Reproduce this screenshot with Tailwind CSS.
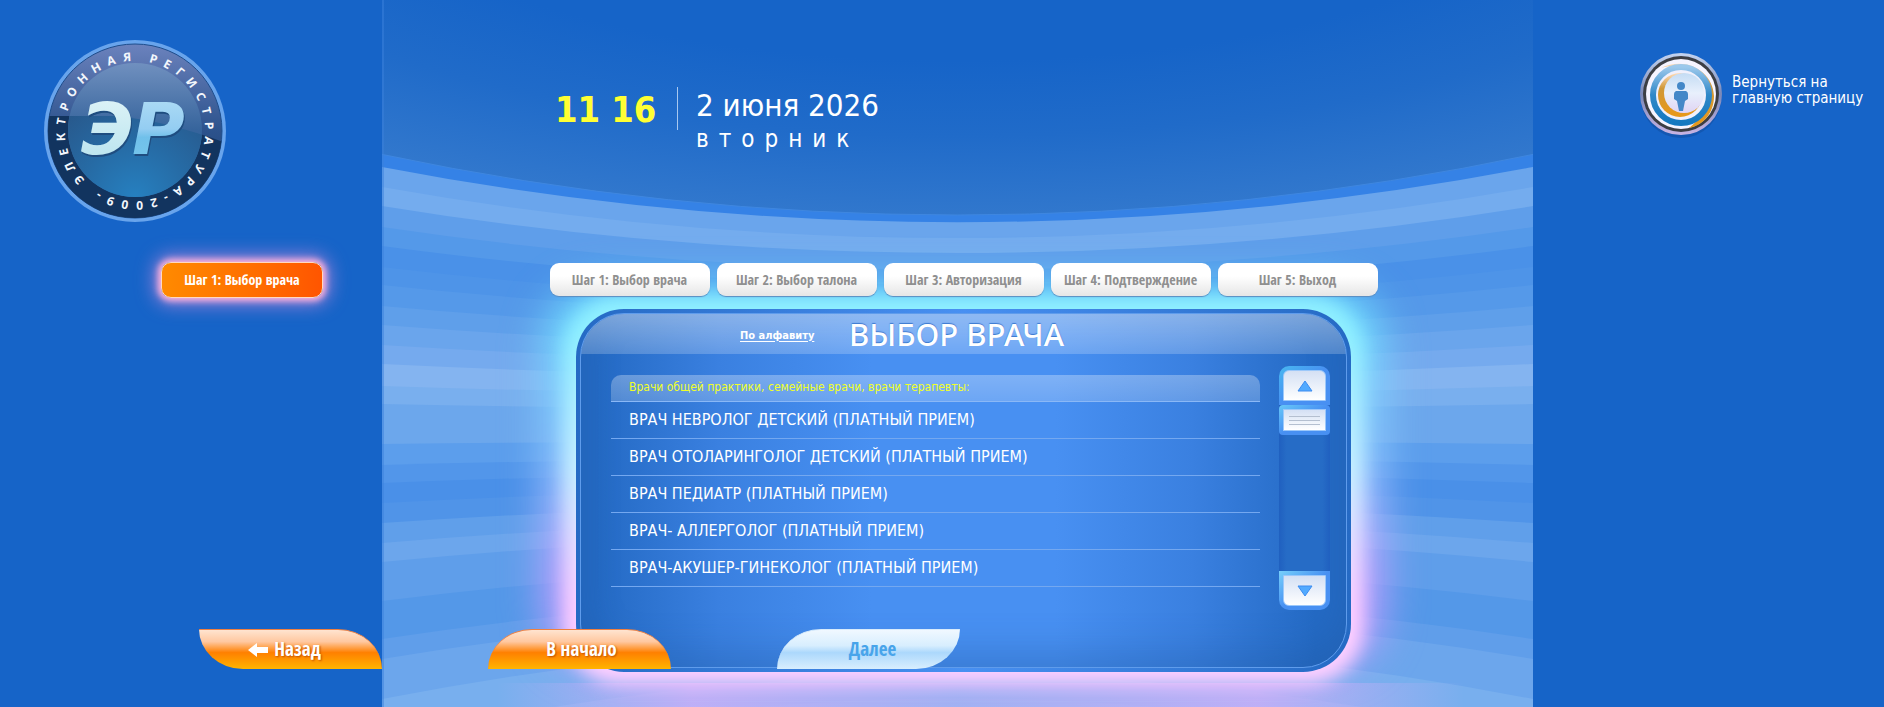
<!DOCTYPE html>
<html lang="ru">
<head>
    <meta charset="UTF-8">
    <meta name="viewport" content="width=device-width, initial-scale=1.0">
    <title>Электронная регистратура - Выбор врача</title>
    <script src="https://cdn.jsdelivr.net/npm/@tailwindcss/browser@4"></script>
</head>
<body class="bg-[#1664c8] font-['DejaVu_Sans_Condensed','Noto_Sans',sans-serif] text-white">
    <div class="relative grid min-h-screen grid-cols-[382px_1fr_351px] overflow-hidden">

        <!-- Левая колонка -->
        <aside class="flex flex-col pt-10">
            <svg class="ml-11 h-[182px] w-[182px]" viewBox="0 0 182 182" role="img" aria-label="Электронная регистратура">
                <defs>
                    <linearGradient id="ringTop" x1="0" y1="0" x2="0" y2="1">
                        <stop offset="0" stop-color="#6b82bd"/>
                        <stop offset="0.5" stop-color="#2c528c"/>
                        <stop offset="1" stop-color="#163b68"/>
                    </linearGradient>
                    <linearGradient id="disc" x1="0" y1="0" x2="0" y2="1">
                        <stop offset="0" stop-color="#7090bf"/>
                        <stop offset="0.5" stop-color="#36649c"/>
                        <stop offset="1" stop-color="#2d6aa8"/>
                    </linearGradient>
                    <radialGradient id="discLow" cx="0.5" cy="1" r="0.8">
                        <stop offset="0" stop-color="#2680c0"/>
                        <stop offset="0.5" stop-color="#266ba5"/>
                        <stop offset="1" stop-color="#28588b"/>
                    </radialGradient>
                    <clipPath id="below"><path d="M0 76H70Q120 80 182 103V182H0Z"/></clipPath>
                    <linearGradient id="fillE" x1="0" y1="0" x2="0" y2="1">
                        <stop offset="0" stop-color="#e2f5f8"/>
                        <stop offset="1" stop-color="#b5e2ee"/>
                    </linearGradient>
                    <linearGradient id="fillR" x1="0" y1="0" x2="0" y2="1">
                        <stop offset="0" stop-color="#b5e0f6"/>
                        <stop offset="0.5" stop-color="#94cdf2"/>
                        <stop offset="0.6" stop-color="#70c0ea"/>
                        <stop offset="1" stop-color="#78c8ec"/>
                    </linearGradient>
                    <path id="ringPath" d="M41 140A70 70 0 1 1 141 140A70 70 0 0 1 41 140"/>
                </defs>
                <circle cx="91" cy="91" r="91" fill="#68a4ec"/>
                <circle cx="91" cy="91" r="87" fill="url(#ringTop)" stroke="#1d4d8c"/>
                <circle cx="91" cy="91" r="87" fill="#12345f" clip-path="url(#below)"/>
                <circle cx="91" cy="90" r="67" fill="url(#disc)"/>
                <circle cx="91" cy="90" r="67" fill="url(#discLow)" clip-path="url(#below)"/>
                <text class="font-['Noto_Sans',sans-serif] text-[12px] font-bold tracking-[7px]" fill="#f2f6fc"><textPath href="#ringPath">ЭЛЕКТРОННАЯ РЕГИСТРАТУРА-2009-</textPath></text>
                <g class="font-['DejaVu_Sans',sans-serif] text-[72px] font-bold italic drop-shadow-[1px_2px_0_#1f4d80]">
                    <text x="37" y="114" fill="url(#fillE)">Э</text>
                    <text x="88" y="114" fill="url(#fillR)">Р</text>
                </g>
            </svg>
            <div class="pt-10 pl-[161px]">
                <button class="h-9 w-[162px] rounded-[10px] border border-[#ffd9c0] bg-linear-to-r from-[#ff8a00] to-[#ff5500] font-['Open_Sans_Condensed','Roboto_Condensed','DejaVu_Sans_Condensed',sans-serif] text-[14px] leading-4 font-bold shadow-[0_0_6px_3px_#ffb4dc,0_0_18px_7px_#e090e0a0]">Шаг 1: Выбор врача</button>
            </div>
        </aside>

        <!-- Центральная часть -->
        <main class="relative isolate flex flex-col">
            <svg class="absolute inset-0 -z-10 h-full w-full" viewBox="0 0 1151 707" preserveAspectRatio="none" aria-hidden="true">
                <defs>
                    <radialGradient id="sky" gradientUnits="userSpaceOnUse" cx="575" cy="-200" r="420" gradientTransform="matrix(2.6 0 0 1 -920 0)">
                        <stop offset="0" stop-color="#1664c8"/>
                        <stop offset="0.62" stop-color="#1664c8"/>
                        <stop offset="0.8" stop-color="#206bc9"/>
                        <stop offset="1" stop-color="#3278cd"/>
                    </radialGradient>
                    <linearGradient id="floor" x1="0" y1="0" x2="1" y2="0">
                        <stop offset="0.1" stop-color="#c8b0f8" stop-opacity="0"/>
                        <stop offset="0.27" stop-color="#c8b0f8" stop-opacity="0.85"/>
                        <stop offset="0.5" stop-color="#a8b0f4" stop-opacity="0.7"/>
                        <stop offset="0.76" stop-color="#c8b0f8" stop-opacity="0.85"/>
                        <stop offset="0.94" stop-color="#c8b0f8" stop-opacity="0"/>
                    </linearGradient>
                </defs>
                <rect width="1151" height="707" fill="#3582e6"/>
                <g id="bands"></g>
                <path d="M-2 -2H1153V154Q575 276 -2 154Z" fill="url(#sky)" stroke="#3f87e0"/>
                <rect y="683" width="1151" height="24" fill="url(#floor)"/>
                <path d="M1 0V707" stroke="#3a80dc" stroke-width="1"/>
            </svg>

            <div class="flex h-[263px] pt-[87px] pl-[173px]">
                <time class="w-[122px] pt-[3px] text-[36px] leading-10 font-bold text-[#ffff33]">11 16</time>
                <div class="h-[43px] w-px bg-[#a8c8f0]"></div>
                <div class="pl-[18px]">
                    <p class="text-[31px] leading-9">2 июня 2026</p>
                    <p class="text-[24px] leading-8 tracking-[10px]">вторник</p>
                </div>
            </div>

            <div class="flex flex-col items-center pl-3">
                <ol class="relative z-10 flex gap-[7px] font-['Open_Sans_Condensed','Roboto_Condensed','DejaVu_Sans_Condensed',sans-serif] text-[14px] font-bold whitespace-nowrap text-[#8f8f8f]">
                    <li class="flex h-[33px] w-[160px] items-center justify-center rounded-[9px] bg-linear-to-b from-white from-40% to-[#e6e6e6] shadow-[0_1px_1px_#5a8cc0]">Шаг 1: Выбор врача</li>
                    <li class="flex h-[33px] w-[160px] items-center justify-center rounded-[9px] bg-linear-to-b from-white from-40% to-[#e6e6e6] shadow-[0_1px_1px_#5a8cc0]">Шаг 2: Выбор талона</li>
                    <li class="flex h-[33px] w-[160px] items-center justify-center rounded-[9px] bg-linear-to-b from-white from-40% to-[#e6e6e6] shadow-[0_1px_1px_#5a8cc0]">Шаг 3: Авторизация</li>
                    <li class="flex h-[33px] w-[160px] items-center justify-center rounded-[9px] bg-linear-to-b from-white from-40% to-[#e6e6e6] shadow-[0_1px_1px_#5a8cc0]">Шаг 4: Подтверждение</li>
                    <li class="flex h-[33px] w-[160px] items-center justify-center rounded-[9px] bg-linear-to-b from-white from-40% to-[#e6e6e6] shadow-[0_1px_1px_#5a8cc0]">Шаг 5: Выход</li>
                </ol>

                <section class="relative mt-[13px] w-[775px]">
                    <!-- свечение вокруг панели -->
                    <div class="absolute -inset-x-8 -top-6 bottom-1 -z-10 rounded-[60px] bg-linear-to-b from-[#70dcff] from-10% via-[#90c8ff] via-45% to-[#c0a0ff] to-75% blur-[20px]"></div>
                    <div class="absolute -inset-x-3 -top-3 -bottom-3 -z-10 rounded-[56px] bg-linear-to-b from-[#90f0ff] from-10% via-[#c8f0ff] via-45% to-[#ffd0ff] to-80% blur-[9px]"></div>

                    <div class="rounded-[48px] bg-linear-to-r from-[#256ac4] via-[#4890f2] to-[#256ac4] p-1">
                        <div class="h-[355px] overflow-hidden rounded-[44px] border border-[#5f9cec] bg-[linear-gradient(90deg,#246ac4_2%,#3a80e0_18%,#4890f2_38%,#4890f2_62%,#3a80e0_80%,#246ac4_96%)] shadow-[inset_0_-14px_36px_#2058a060]">
                            <header class="flex h-10 items-center bg-linear-to-b from-white/40 to-white/20 pl-[159px]">
                                <a href="#" class="w-[109px] pt-1 text-[11px] font-bold underline underline-offset-2">По алфавиту</a>
                                <h1 class="font-['Noto_Sans',sans-serif] text-[31px] leading-10 font-medium [text-shadow:0_-1px_1px_#3a78d0]">ВЫБОР ВРАЧА</h1>
                            </header>
                            <div class="flex justify-between pt-3 pr-4 pl-[30px]">
                                <div class="w-[649px] pt-[9px]">
                                    <h2 class="h-[27px] rounded-t-[10px] border-b border-[#8ab8f6] bg-linear-to-b from-white/30 to-white/20 pl-[18px] text-[12px] leading-6 text-[#f0ff28]">Врачи общей практики, семейные врачи, врачи терапевты:</h2>
                                    <ul class="text-[16px] leading-9">
                                        <li class="border-b border-[#74a8f0] pl-[18px]"><a href="#" class="block">ВРАЧ НЕВРОЛОГ ДЕТСКИЙ (ПЛАТНЫЙ ПРИЕМ)</a></li>
                                        <li class="border-b border-[#74a8f0] pl-[18px]"><a href="#" class="block">ВРАЧ ОТОЛАРИНГОЛОГ ДЕТСКИЙ (ПЛАТНЫЙ ПРИЕМ)</a></li>
                                        <li class="border-b border-[#74a8f0] pl-[18px]"><a href="#" class="block">ВРАЧ ПЕДИАТР (ПЛАТНЫЙ ПРИЕМ)</a></li>
                                        <li class="border-b border-[#74a8f0] pl-[18px]"><a href="#" class="block">ВРАЧ- АЛЛЕРГОЛОГ (ПЛАТНЫЙ ПРИЕМ)</a></li>
                                        <li class="border-b border-[#74a8f0] pl-[18px]"><a href="#" class="block">ВРАЧ-АКУШЕР-ГИНЕКОЛОГ (ПЛАТНЫЙ ПРИЕМ)</a></li>
                                    </ul>
                                </div>
                                <!-- полоса прокрутки -->
                                <div class="flex h-[244px] w-[51px] flex-col rounded-[10px] bg-[linear-gradient(90deg,#2060c0,#266cc6_15%,#266cc6_85%,#2060c0)]">
                                    <button aria-label="Вверх" class="h-[39px] rounded-t-[10px] bg-linear-to-br from-[#48b8f0] via-[#4890f2] to-[#4890f2] p-1">
                                        <span class="flex h-full items-center justify-center rounded-t-[6px] border border-[#9cc8fa] bg-linear-to-b from-[#d4e0f4] to-white">
                                            <svg class="h-3 w-4" viewBox="0 0 16 12"><path d="M8 1L15 11H1Z" fill="#52aaff" stroke="#3c8cf0"/></svg>
                                        </span>
                                    </button>
                                    <div class="h-[30px] rounded-[4px] bg-linear-to-br from-[#68c8f8] via-[#4890f2] to-[#4890f2] p-1">
                                        <div class="flex h-full flex-col items-center justify-center gap-[3px] border border-[#9cc8fa] bg-linear-to-b from-[#d4e0f4] to-white">
                                            <i class="h-px w-[31px] bg-[#b4bfd0]"></i>
                                            <i class="h-px w-[31px] bg-[#b4bfd0]"></i>
                                            <i class="h-px w-[31px] bg-[#b4bfd0]"></i>
                                        </div>
                                    </div>
                                    <div class="grow"></div>
                                    <button aria-label="Вниз" class="h-[39px] rounded-b-[10px] bg-linear-to-br from-[#78d0fa] via-[#4890f2] to-[#4890f2] p-1">
                                        <span class="flex h-full items-center justify-center rounded-b-[6px] border border-[#9cc8fa] bg-linear-to-b from-[#d4e0f4] to-white">
                                            <svg class="h-3 w-4" viewBox="0 0 16 12"><path d="M1 1H15L8 11Z" fill="#52aaff" stroke="#3c8cf0"/></svg>
                                        </span>
                                    </button>
                                </div>
                            </div>
                        </div>
                    </div>
                </section>
            </div>
        </main>

        <!-- Правая колонка -->
        <aside class="pt-[51px] pl-[105px]">
            <a href="#" class="flex items-start">
                <svg class="h-[88px] w-[86px] shrink-0" viewBox="0 0 86 88" aria-hidden="true">
                    <defs>
                        <linearGradient id="rim" x1="0" y1="0" x2="0" y2="1">
                            <stop offset="0" stop-color="#c4d4f0"/>
                            <stop offset="0.5" stop-color="#7a88b8"/>
                            <stop offset="1" stop-color="#c8b4e4"/>
                        </linearGradient>
                        <linearGradient id="core" x1="0" y1="0" x2="0" y2="1">
                            <stop offset="0" stop-color="#c4dcf4"/>
                            <stop offset="0.5" stop-color="#e8f0fc"/>
                            <stop offset="1" stop-color="#e0d4f4"/>
                        </linearGradient>
                        <linearGradient id="blueRing" x1="0" y1="0" x2="0" y2="1">
                            <stop offset="0" stop-color="#9cc8ec"/>
                            <stop offset="0.5" stop-color="#3088c8"/>
                            <stop offset="1" stop-color="#1478c0"/>
                        </linearGradient>
                        <linearGradient id="gold" x1="0" y1="0" x2="0" y2="1">
                            <stop offset="0" stop-color="#ffdcb8"/>
                            <stop offset="0.35" stop-color="#d09838"/>
                            <stop offset="1" stop-color="#e89818"/>
                        </linearGradient>
                    </defs>
                    <circle cx="43" cy="47" r="40" fill="#0f4a9c" opacity="0.5"/>
                    <circle cx="43" cy="43" r="41" fill="url(#rim)"/>
                    <circle cx="43" cy="43" r="38" fill="#3c3e44"/>
                    <circle cx="43" cy="43" r="35" fill="#f6f4ff"/>
                    <path d="M23 17C48 5 75 20 76 45C76 63 64 75 51 77C73 60 74 38 64 26C54 15 38 13 23 17Z" fill="url(#gold)"/>
                    <circle cx="43" cy="44" r="28" fill="#f0f0fc" stroke="url(#blueRing)" stroke-width="6"/>
                    <circle cx="42" cy="44" r="22" fill="url(#gold)"/>
                    <circle cx="46" cy="42" r="20" fill="url(#core)"/>
                    <circle cx="43" cy="35" r="4" fill="#4488c8"/>
                    <path d="M38 40H48Q50 41 50 43V48L47 50L45 60H41L39 50L36 48V43Q36 41 38 40Z" fill="#4488c8"/>
                </svg>
                <span class="pt-[23px] pl-2 text-[15px] leading-4 whitespace-nowrap">Вернуться на<br>главную страницу</span>
            </a>
        </aside>

        <!-- Навигация поверх панели -->
        <nav class="absolute top-[629px] left-[199px] flex gap-[106px] font-['Open_Sans_Condensed','Roboto_Condensed','DejaVu_Sans_Condensed',sans-serif] text-[19px] font-bold">
            <button class="flex h-10 w-[183px] items-center justify-center gap-[6px] rounded-tr-[44px_40px] rounded-bl-[44px_40px] border-t border-[#f08040] bg-[linear-gradient(#ffe4d0,#ffc8a0_30%,#ff8000_58%,#ffb400)] pr-3 [text-shadow:1px_1px_2px_#c05000]">
                <svg class="h-[14px] w-5" viewBox="0 0 20 14" aria-hidden="true"><path d="M0 7L9 0V4H20V10H9V14Z" fill="#fff"/></svg>
                Назад
            </button>
            <button class="h-10 w-[183px] rounded-t-[44px_40px] border-t border-[#f08040] bg-[linear-gradient(#ffe4d0,#ffc8a0_30%,#ff8000_58%,#ffb400)] pl-1 [text-shadow:1px_1px_2px_#c05000]">В начало</button>
            <button class="h-10 w-[183px] rounded-tl-[44px_40px] rounded-br-[44px_40px] border-t border-[#d8ecfc] bg-[linear-gradient(#f0f8ff,#d8eefe_40%,#acd8fc_58%,#d8eefe)] pl-2 text-[#48a4ea]">Далее</button>
        </nav>
    </div>

    <script>
        // Полосы фона: верхний край слева и цвет
        const bands = [
            [167, '#6aa5ec'], [187, '#74acee'], [206, '#5f9eea'], [227, '#5499e9'], [246, '#4a91e8'],
            [267, '#4e94e8'], [285, '#5599e9'], [306, '#5f9fea'], [325, '#6aa5ec'], [345, '#75aaee'],
            [364, '#84b4f0'], [386, '#79afee'], [404, '#6ca7ec'], [444, '#5c9eec'], [465, '#5296ea'],
            [483, '#4a90e8'], [503, '#5094e8'], [523, '#609fea'], [543, '#6ca6ec'], [562, '#5f9eea'],
            [601, '#5498e8'], [639, '#609eea'], [659, '#6ca6ec'], [699, '#78afee'], [740, '#84b4f0'], [770, '#90b8f0']
        ];

        document.getElementById('bands').innerHTML = bands.map(([y, color]) => {
            const bend = y + 0.42 * (430 - y);
            return `<path d="M0 ${y}Q575 ${bend} 1151 ${y}V707H0Z" fill="${color}"/>`;
        }).join('');
    </script>
</body>
</html>
